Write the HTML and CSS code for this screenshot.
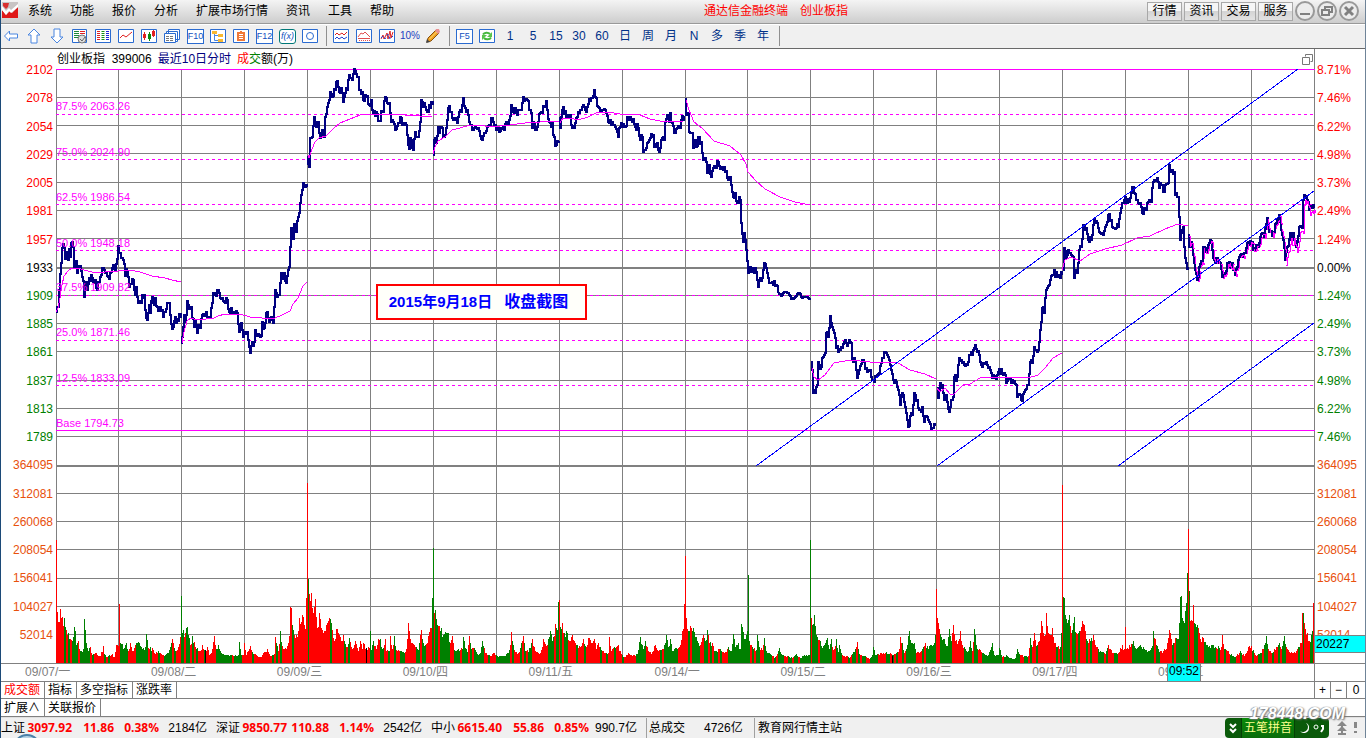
FILE: index.html
```html
<!DOCTYPE html>
<html lang="zh-CN">
<head>
<meta charset="utf-8">
<title>通达信金融终端 创业板指</title>
<link rel="stylesheet" href="styles.css">
</head>
<body>
<header class="menubar">
  <svg class="logo" viewBox="0 0 16 16" aria-hidden="true"><rect width="16" height="16" fill="#c8c4c4"/><path d="M1 1h6l-1 4-2 2-3-3z" fill="#d83030"/><path d="M16 5v11H0V8l4 5 4-4 2 2z" fill="#e01818"/><path d="M0 4l4 5 3-3 2 2 7-6v3l-7 6-2-2-3 4-4-5z" fill="#fff"/></svg>
  <nav class="menu">
    <button>系统</button><button>功能</button><button>报价</button><button>分析</button><button>扩展市场行情</button><button>资讯</button><button>工具</button><button>帮助</button>
  </nav>
  <h1 class="title"><span>通达信金融终端</span><span>创业板指</span></h1>
  <div class="quick"><button>行情</button><button>资讯</button><button>交易</button><button>服务</button></div>
  <div class="window">
    <button aria-label="最小化"><svg viewBox="0 0 20 20"><circle cx="10" cy="10" r="9"/><path d="M5 13h10" stroke-width="2"/></svg></button>
    <button aria-label="还原"><svg viewBox="0 0 20 20"><circle cx="10" cy="10" r="9"/><path d="M8 8V6h7v5h-3M5 9h7v5H5z"/></svg></button>
    <button aria-label="关闭"><svg viewBox="0 0 20 20"><circle cx="10" cy="10" r="9"/><path d="M6 6l8 8M14 6l-8 8" stroke-width="3"/></svg></button>
  </div>
</header>

<div class="toolbar">
  <button aria-label="后退"><svg viewBox="0 0 16 16"><path d="M1.500 8l5-5v3h8v4h-8v3z" fill="#fff" stroke="#4a86e0"/></svg></button>
  <button aria-label="上一个"><svg viewBox="0 0 16 16"><path d="M8 1l6 6h-3v8H5V7H2z" fill="#fff" stroke="#4a86e0"/></svg></button>
  <button aria-label="下一个"><svg viewBox="0 0 16 16"><path d="M8 15l6-6h-3V1H5v8H2z" fill="#fff" stroke="#4a86e0"/></svg></button>
  <button aria-label="自选"><svg viewBox="0 0 16 16"><path class="frame" d="M.5 1.500h14v13H.5z"/><path d="M2 3.500h5M2 5.500h5M2 7.500h5M2 9.500h4" stroke="#1c8a3a"/><path d="M8 3.500h5M8 5.500h5" stroke="#e02020"/><circle cx="10" cy="11" r="4" fill="#ddd" stroke="#777"/><path d="M8 11l2 2 3-4" stroke="#666" fill="none"/></svg></button>
  <button aria-label="行情列表"><svg viewBox="0 0 16 16"><path class="frame" d="M.5 1.500h15v13H.5z"/><g stroke-width="3" stroke-dasharray="1 1"><path d="M3.500 3v10" stroke="#e02020"/><path d="M8 3v10" stroke="#169016"/><path d="M12.500 3v10" stroke="#2020e0"/></g></svg></button>
  <button aria-label="分时图"><svg viewBox="0 0 16 16"><path class="frame" d="M.5 1.500h15v13H.5z"/><path d="M2 10l3-3 3 2 6-5" fill="none" stroke="#e02020"/></svg></button>
  <button aria-label="K线图"><svg viewBox="0 0 16 16"><path class="frame" d="M.5 1.500h15v13H.5z"/><path d="M3.500 4v8M12.500 2v7" stroke="#e02020"/><path d="M3.500 6v4M12.500 3v5" stroke="#e02020" stroke-width="3"/><path d="M8.500 4v9" stroke="#0a8a0a"/><path d="M8.500 6v5" stroke="#0a8a0a" stroke-width="3"/></svg></button>
  <button aria-label="多窗口"><svg viewBox="0 0 16 16"><path class="frame" d="M4.500 1.500h11v10h-11zM2.500 3.500h11v10h-11z"/><path class="frame" d="M.5 5.500h11v9H.5z"/><path d="M2 8.500h8M2 10.500h8M2 12.500h8" stroke="#777" stroke-dasharray="3 1"/></svg></button>
  <button class="key">F10</button>
  <button aria-label="板块"><svg viewBox="0 0 16 16"><path class="frame" d="M.5 1.500h15v13H.5z"/><path d="M4.500 5v7.500H8M4.500 7.500H9" fill="none" stroke="#4a86e0"/><path d="M2 3h5v3H2zM8 6h5v3H8zM8 11h5v3H8z" fill="#f8b830"/></svg></button>
  <button aria-label="自选股"><svg viewBox="0 0 16 16"><path class="frame" d="M.5 1.500h15v13H.5z"/><path d="M4 4h3V3h2v1h3v9H4z" fill="#f07838"/><path d="M6 6.500h4M6 8.500h4M6 10.500h4" stroke="#fff"/></svg></button>
  <button class="key">F12</button>
  <button class="key fx"><i>f(x)</i></button>
  <button aria-label="圆"><svg viewBox="0 0 16 16"><path class="frame" d="M.5 1.500h15v13H.5z"/><circle cx="8" cy="8" r="3.500" fill="none" stroke="#2a6bd0"/></svg></button>
  <span class="sep"></span>
  <button aria-label="双线"><svg viewBox="0 0 16 16"><path class="frame" d="M.5 1.500h15v13H.5z"/><path d="M2 7l2-2 2 2 3-2 2 2 3-3" fill="none" stroke="#e02020"/><path d="M2 11l2-2 2 2 3-2 2 2 3-2" fill="none" stroke="#2040d0"/></svg></button>
  <button aria-label="叠加"><svg viewBox="0 0 16 16"><path class="frame" d="M.5 1.500h15v13H.5z"/><path d="M2 9l3-4 2 1 2-2 3 3 2 2M2 10.500h12" fill="none" stroke="#e05050"/><path d="M3 12.500h11" stroke="#e05050" stroke-dasharray="1 1"/></svg></button>
  <button aria-label="波动"><svg viewBox="0 0 16 16"><path class="frame" d="M.5 1.500h15v13H.5z"/><path d="M2 11l2-4 1 4 3-6 1 6 2-8 1 7 2-6" fill="none" stroke="#e02020"/><path d="M2 10l2-2 2 3 3-5 2 5 3-3" fill="none" stroke="#2040d0" stroke-dasharray="3 2"/></svg></button>
  <button class="percent">10%</button>
  <button aria-label="画线"><svg viewBox="0 0 16 16"><path d="M2 14l1-4 8-8 3 3-8 8z" fill="#f0a020" stroke="#865010"/><path d="M10 3l1-2h3l1 3-2 2z" fill="#e89090"/><path d="M1 15l1-4 3 3z" fill="#444"/><path d="M4.500 11l7-7" stroke="#ffe080"/></svg></button>
  <span class="sep"></span>
  <button class="key">F5</button>
  <button aria-label="刷新"><svg viewBox="0 0 16 16"><path class="frame" d="M.5 1.500h15v13H.5z"/><path d="M4 6.500A4 3 0 0 1 11 6M12 9.500A4 3 0 0 1 5 10" fill="none" stroke="#45b83c" stroke-width="2"/><path d="M13 4v5H8zM3 12V7h5z" fill="#58c44c"/></svg></button>
  <button>1</button><button>5</button><button>15</button><button>30</button><button>60</button><button>日</button><button>周</button><button>月</button><button>N</button><button>多</button><button>季</button><button>年</button>
  <span class="sep"></span>
</div>

<main class="chart">
  <div class="heading">
    <p><span>创业板指&nbsp; 399006</span> <span class="navy">最近10日分时</span> <span><b class="up">成</b><b class="down">交</b>额(万)</span></p>
    <button aria-label="窗口"><svg viewBox="0 0 11 11"><path d="M3.500 2.500v-2h7v7h-2M.5 3.500h7v7h-7z" fill="none" stroke="#777"/></svg></button>
  </div>
  <div class="corner"></div>

  <ol class="axis left">
    <li class="up">2102</li><li class="up">2078</li><li class="up">2054</li><li class="up">2029</li><li class="up">2005</li><li class="up">1981</li><li class="up">1957</li><li>1933</li><li class="down">1909</li><li class="down">1885</li><li class="down">1861</li><li class="down">1837</li><li class="down">1813</li><li class="down">1789</li><li class="vol">364095</li><li class="vol">312081</li><li class="vol">260068</li><li class="vol">208054</li><li class="vol">156041</li><li class="vol">104027</li><li class="vol">52014</li>
  </ol>

  <div class="plot">
    <svg id="plot" viewBox="56 69 1259 595" preserveAspectRatio="none" role="img" aria-label="创业板指最近10日分时走势"></svg>
    <span class="fib" style="top:5.1%">87.5% 2063.26</span>
    <span class="fib" style="top:12.7%">75.0% 2024.90</span>
    <span class="fib" style="top:20.3%">62.5% 1986.54</span>
    <span class="fib" style="top:28%">50.0% 1948.18</span>
    <span class="fib" style="top:35.5%">37.5% 1909.82</span>
    <span class="fib" style="top:43.1%">25.0% 1871.46</span>
    <span class="fib" style="top:50.7%">12.5% 1833.09</span>
    <span class="fib" style="top:58.3%">Base 1794.73</span>
    <p class="note"><span>2015年9月18日</span><span>收盘截图</span></p>
  </div>

  <ol class="axis right">
    <li class="up">8.71%</li><li class="up">7.46%</li><li class="up">6.22%</li><li class="up">4.98%</li><li class="up">3.73%</li><li class="up">2.49%</li><li class="up">1.24%</li><li>0.00%</li><li class="down">1.24%</li><li class="down">2.49%</li><li class="down">3.73%</li><li class="down">4.98%</li><li class="down">6.22%</li><li class="down">7.46%</li><li class="vol">364095</li><li class="vol">312081</li><li class="vol">260068</li><li class="vol">208054</li><li class="vol">156041</li><li class="vol">104027</li><li class="vol">52014</li>
    <li class="cursor">20227</li>
  </ol>

  <div class="dates">
    <ol><li>09/07/一</li><li>09/08/二</li><li>09/09/三</li><li>09/10/四</li><li>09/11/五</li><li>09/14/一</li><li>09/15/二</li><li>09/16/三</li><li>09/17/四</li><li>09/18/五</li></ol>
    <span class="time">09:52</span>
  </div>
</main>

<div class="tabs">
  <button class="up">成交额</button><button>指标</button><button>多空指标</button><button>涨跌率</button>
  <div class="zoomers"><button>+</button><button>−</button><button>0</button></div>
</div>
<div class="tabs lower"><button>扩展∧</button><button>关联报价</button></div>

<footer class="status">
  <div class="index"><span>上证</span><b>3097.92</b><b>11.86</b><b>0.38%</b><span>2184亿</span></div>
  <div class="index"><span>深证</span><b>9850.77</b><b>110.88</b><b>1.14%</b><span>2542亿</span></div>
  <div class="index"><span>中小</span><b>6615.40</b><b>55.86</b><b>0.85%</b><span>990.7亿</span></div>
  <div class="total"><span>总成交</span><span>4726亿</span></div>
  <div class="host">教育网行情主站</div>
  <div class="ime">
    <svg viewBox="0 0 14 20"><path d="M4 6l3 3 3-3M4 11l3 3 3-3" fill="none" stroke="#fff" stroke-width="2"/></svg>
    <span>五笔拼音</span>
    <svg class="wide" viewBox="0 0 34 20"><path d="M11 5a5 5 0 0 1-6 8 5 5 0 0 0 9-3 5 5 0 0 0-3-5z" fill="#fff"/><circle cx="21" cy="9" r="2" fill="none" stroke="#fff"/><path d="M26 8h2v3l-2 3" fill="none" stroke="#fff" stroke-width="2"/></svg>
  </div>
  <svg class="tray" viewBox="0 0 28 16" aria-hidden="true"><path d="M6 1l5 5H1zM6 6l5 5H1z" fill="#888"/><path d="M6 4v10M2 14h8" stroke="#888" stroke-width="2"/><path d="M19.500 2v6" stroke="#888" stroke-width="3"/><path d="M18 12h3" stroke="#888" stroke-width="2"/></svg>
  <span class="orb"></span>
  <span class="watermark">178448.COM</span>
</footer>
<script src="chart.js"></script>
</body>
</html>
```
FILE: styles.css
```css
* { box-sizing: border-box; }
body {
  margin: 0;
  min-height: 100vh;
  display: flex;
  flex-direction: column;
  overflow: hidden;
  background: #fff;
  border-left: 1px solid #1c4a78;
  border-right: 1px solid #6f8498;
  font: 12px/16px "Liberation Sans", "Noto Sans CJK SC", sans-serif;
  color: #000;
}
button {
  margin: 0;
  padding: 0;
  border: 0;
  background: none;
  font: inherit;
  color: inherit;
  white-space: nowrap;
}
ol { list-style: none; margin: 0; padding: 0; }
p, h1 { margin: 0; font: inherit; }
.up { color: #f00; }
.down { color: #008000; }
.navy { color: #000080; }
.vol { color: #e8500c; }

.menubar {
  position: relative;
  display: flex;
  align-items: center;
  height: 24px;
  padding-bottom: 1px;
  background: linear-gradient(#f4f4f4, #cdcdcd);
  border-bottom: 1px solid #999;
}
.logo { width: 16px; height: 16px; margin: 0 10px 3px 1px; }
.menu { display: flex; gap: 18px; }
.title {
  position: absolute;
  left: 50%;
  margin-left: 21px;
  display: flex;
  gap: 12px;
  color: #f00;
}
.quick { display: flex; gap: 2px; margin-left: auto; }
.quick button {
  width: 35px;
  height: 19px;
  border: 1px solid #a8a8a8;
  background: linear-gradient(#f6f6f6 50%, #d4d4d4 50%, #e2e2e2);
}
.window { display: flex; gap: 2px; padding: 0 6px 0 2px; }
.window button { width: 20px; height: 20px; }
.window svg {
  display: block;
  fill: none;
  stroke: #808080;
  stroke-width: 2;
}
.window circle { fill: #ececec; stroke: #999; }

.toolbar {
  display: flex;
  align-items: center;
  height: 25px;
  padding-bottom: 1px;
  background: #f0f0f0;
  border-top: 1px solid #fff;
  border-bottom: 1px solid #696969;
  color: #003088;
}
.toolbar button {
  width: 23px;
  height: 20px;
  padding-right: 3px;
  display: flex;
  justify-content: center;
  align-items: center;
}
.toolbar svg { width: 16px; height: 16px; }
.toolbar .frame { fill: #fff; stroke: #2a6bd0; }
.toolbar .sep { width: 8px; height: 20px; }
.toolbar .sep::before {
  content: "";
  display: block;
  width: 1px;
  height: 20px;
  margin-left: 3px;
  background: #909090;
}
.toolbar .key {
  width: 17px;
  height: 15px;
  margin: 0 4px 0 2px;
  padding: 0;
  border: 1px solid #2a6bd0;
  background: #fff;
  font-size: 9px;
  line-height: 12px;
  color: #1050c0;
}
.toolbar .fx { border-color: #007878; border-radius: 3px; }
.toolbar .percent { font-size: 10px; color: #2040c0; }

.chart {
  flex: 1;
  display: grid;
  grid-template-columns: 55px minmax(0, 1fr) 50px;
  grid-template-rows: 20px minmax(0, 1fr) 18px;
}
.heading {
  grid-column: 1 / 3;
  display: flex;
  justify-content: space-between;
  align-items: center;
  padding-left: 56px;
  border-right: 1px solid #808080;
}
.heading p { display: flex; gap: 6px; }
.heading b { font-weight: normal; }
.heading button { width: 11px; height: 15px; margin-right: 1px; }
.heading svg { display: block; width: 11px; height: 11px; }
.axis {
  display: grid;
  grid-template-rows: repeat(21, minmax(0, 1fr));
  align-items: center;
  margin: -13px 0 15px;
}
.left { text-align: right; padding-right: 3px; }
.right { position: relative; padding-left: 2px; }
.cursor {
  position: absolute;
  left: 0;
  right: 0;
  bottom: -4px;
  padding-left: 1px;
  background: #0ff;
  border: solid #808080;
  border-width: 1px 0;
}
.plot { position: relative; }
.plot svg {
  position: absolute;
  width: 100%;
  height: 100%;
  overflow: visible;
}
.fib {
  position: absolute;
  left: 0;
  font-size: 11px;
  line-height: 14px;
  color: #f0f;
}
.note {
  position: absolute;
  left: 25.4%;
  top: 36.1%;
  display: flex;
  gap: 12px;
  padding: 6px 11px;
  border: 2px solid #f00;
  background: #fffffa;
  font-size: 15px;
  line-height: 20px;
  font-weight: bold;
  color: #00f;
  height: 36px;
  width: 211px;
  white-space: nowrap;
}
.note span + span { font-size: 16px; }
.dates {
  grid-column: 1 / 4;
  position: relative;
  border-bottom: 1px solid #808080;
  padding: 0 50px 0 55px;
  color: #808080;
}
.dates::after {
  content: "";
  position: absolute;
  right: 50px;
  top: 0;
  bottom: 0;
  border-right: 1px solid #808080;
}
.dates::before {
  content: "";
  position: absolute;
  left: 0;
  right: 0;
  top: -1px;
  border-top: 1px solid #808080;
}
.dates ol { display: grid; grid-template-columns: repeat(10, 1fr); }
.dates li { margin-left: -31px; white-space: nowrap; }
.time {
  position: absolute;
  right: 164px;
  top: 0;
  width: 34px;
  height: 18px;
  background: #0ff;
  border: 1px solid #808080;
  border-top: 0;
  line-height: 15px;
  text-align: center;
  color: #000;
}

.tabs {
  display: flex;
  height: 17px;
  border-bottom: 1px solid #808080;
}
.tabs button { padding: 0 4px 0 3px; border-right: 1px solid #808080; line-height: 16px; }
.lower { height: 18px; }
.lower button:first-child { width: 44px; }
.zoomers {
  display: flex;
  width: 51px;
  margin-left: auto;
  border-left: 1px solid #808080;
}
.zoomers button { width: 16px; padding: 0; }
.zoomers button:last-child { width: 18px; border-right: 0; }

.status {
  position: relative;
  display: flex;
  align-items: center;
  height: 21px;
  background: #f0f0f0;
  border-top: 1px solid #e0e0e0;
}
.index {
  display: grid;
  grid-template-columns: 25px 46px 42px 45px 48px;
  width: 215px;
  text-align: right;
  white-space: nowrap;
}
.index span:first-child { text-align: left; }
.index b { color: #f00; font-family: "Open Sans", sans-serif; }
.total {
  display: flex;
  gap: 19px;
  width: 109px;
  padding-left: 2px;
  border: solid #a0a0a0;
  border-width: 0 1px;
  line-height: 20px;
}
.host { padding-left: 3px; }
.ime {
  display: flex;
  align-items: center;
  width: 104px;
  height: 20px;
  margin-left: auto;
  border-radius: 4px;
  background: #0a5a0a;
  color: #ffff90;
}
.ime span {
  width: 54px;
  line-height: 20px;
  text-align: center;
  background: linear-gradient(#0a8a0a, #0a6c0a);
  border: solid #064006;
  border-width: 0 1px;
}
.ime svg { width: 16px; height: 20px; }
.ime .wide { width: 34px; }
.tray { width: 28px; height: 16px; margin: 0 1px 0 7px; }
.orb {
  position: absolute;
  left: 12px;
  bottom: -24px;
  width: 28px;
  height: 28px;
  border: 2px solid #4a80a8;
  border-radius: 50%;
  background: #b8d4e4;
}
.watermark {
  position: absolute;
  right: 20px;
  top: -16px;
  font: bold italic 16px/24px "Liberation Sans", sans-serif;
  color: #fff;
  text-shadow: 0 0 1px #888, 1px 1px 2px #666, -1px 0 1px #aaa;
}
```
FILE: chart.js
```js
const NS = "http://www.w3.org/2000/svg";
const svg = document.getElementById("plot");

function draw(d, stroke, width = 1, extra = {}) {
  const path = document.createElementNS(NS, "path");
  const attrs = { d, stroke, "stroke-width": width, fill: "none", "shape-rendering": "crispEdges", ...extra };
  for (const [key, value] of Object.entries(attrs)) path.setAttribute(key, value);
  svg.append(path);
}
const parse = text => text.trim().split(/\s+/).map(pair => pair.split(",").map(Number));
function noise(n) {
  const v = Math.sin(n * 12.9898) * 43758.5453;
  return v - Math.floor(v);
}

// Grid
const rows = [97, 125, 153, 182, 210, 238, 295, 323, 351, 380, 408, 436, 493, 521, 549, 578, 606, 634, 663];
const columns = [56, 118, 181, 244, 307, 370, 433, 496, 559, 622, 685, 747, 810, 873, 936, 999, 1062, 1125, 1188, 1251, 1314];
draw(rows.map(y => `M56 ${y + 0.5}H1315`).join(""), "#808080");
draw(columns.map(x => `M${x + 0.5} 69V664`).join(""), "#808080");
draw("M56 268H1315M56 466H1315", "#808080", 2);

// Volume: x,height
const volume = parse(`
56,123 57,51 58,41 59,41 60,54 61,45 64,45 65,36 68,30 70,24 73,26 74,36 75,32 76,18 78,22 80,12 83,14 84,44 85,33 86,20 88,12 90,16 92,8 96,10 100,7 103,17 104,9 106,6 112,9 114,6 116,18 118,17
119,59 120,20 124,15 126,20 128,12 130,20 132,12 136,20 139,20 142,14 145,16 146,29 148,15 152,15 155,9 158,12 162,8 168,10 170,16 172,24 175,12 178,16 180,26
181,67 182,30 183,33 185,30 187,36 189,25 190,18 192,27 195,16 200,12 202,18 205,10 207,16 209,8 212,14 214,27 216,14 218,18 221,10 226,8 232,8 238,8 239,21 241,8 243,8 244,20 246,8 250,17 253,9 260,6 267,14 270,7 274,9 275,26 278,12 280,32 282,17 286,14 289,27 290,56 291,55 292,38 294,28 297,26 299,45 303,46 305,34 306,65
307,180 308,84 309,69 310,62 311,70 313,50 315,64 316,46 318,36 319,50 321,35 323,30 326,38 329,45 331,40 333,25 335,24 336,34 338,30 341,22 343,28 346,16 349,25 352,14 355,22 358,12 360,22 362,14 363,20 366,15 369,15
370,32 371,13 373,22 376,14 378,24 380,24 382,14 385,24 386,12 389,12 390,27 392,14 394,27 396,13 400,12 405,11 407,24 408,40 409,32 411,20 414,18 418,13 420,28 421,33 423,20 427,20 430,35 431,35 432,65
433,115 434,50 435,53 437,38 439,37 441,35 443,28 448,30 450,20 452,27 454,13 458,14 462,14 463,26 465,15 467,11 469,27 471,14 474,15 477,9 480,10 482,22 485,10 490,7 493,10 497,7 503,7 508,10 510,18 511,31 512,22 514,13 518,10 522,22 523,27 525,12 530,15 532,24 535,12 540,10 543,24 546,17 549,26 550,32 552,22 555,39 557,33 558,61
559,63 560,36 562,40 564,30 567,30 570,22 572,28 575,20 580,16 583,24 586,16 588,25 592,20 594,24 596,14 598,20 602,12 608,10 609,26 611,12 614,16 618,18 620,12 624,6 628,10 632,7 637,9 640,26 643,14 645,22 648,12 652,11 655,18 658,12 662,14 665,20 666,28 668,16 670,24 672,12 676,15 680,18 682,32 683,34 684,59
685,107 686,45 687,34 690,37 693,35 695,26 697,22 700,18 703,28 705,22 707,33 709,20 712,20 714,12 720,14 724,10 728,16 731,12 733,29 735,16 738,20 740,14 741,39 742,36 744,24 747,32
748,88 749,22 752,16 756,13 757,28 759,16 762,13 764,25 766,12 770,9 775,6 779,15 782,8 788,7 792,5 796,9 800,5 804,8 809,8
810,123 811,45 812,38 814,48 815,37 817,26 820,22 823,17 825,20 827,25 829,14 831,24 833,13 836,24 838,11 839,18 842,8 850,6 855,14 857,21 859,9 864,7 870,5 872,8 873,16 875,8 880,10 886,11 890,10 892,8 896,10 899,14 900,26 902,20 904,10 907,18 909,32 911,20 914,20 916,10 921,12 925,20 928,14 930,18 933,18 935,28
936,74 937,45 939,34 941,26 944,24 947,17 949,34 951,22 953,38 955,22 958,22 960,32 962,18 965,14 968,12 970,22 972,12 974,34 976,18 979,14 982,10 988,8 992,20 994,8 998,8 999,15 1002,6 1006,8 1010,5 1015,5 1017,14 1020,8 1028,7 1030,25 1032,16 1034,30 1036,17 1039,22 1041,42 1043,30 1045,28 1046,50 1048,30 1050,28 1052,35 1054,20 1057,16 1060,16 1061,30
1062,178 1063,66 1064,65 1066,44 1067,40 1069,48 1071,30 1074,46 1076,30 1078,30 1080,32 1082,42 1084,38 1086,24 1090,22 1093,28 1095,18 1100,12 1105,9 1108,18 1112,10 1118,10 1122,18 1124,14 1125,36 1126,14 1133,22 1136,14 1140,18 1144,14 1148,12 1152,17 1153,32 1156,18 1160,12 1166,14 1169,33 1172,18 1176,25 1178,24 1179,40 1180,66 1181,67 1182,45 1184,40 1186,60 1187,90
1188,134 1189,72 1190,42 1192,42 1193,58 1194,40 1197,38 1200,24 1203,25 1207,18 1211,18 1215,16 1221,16 1222,28 1224,14 1228,12 1232,7 1236,7 1240,12 1244,7 1248,16 1251,17 1255,8 1260,10 1264,18 1266,27 1268,14 1272,10 1276,16 1279,20 1281,14 1284,27 1287,14 1290,10 1296,12 1300,20 1301,20 1302,50 1303,50 1304,40 1306,28 1307,30 1309,22 1311,28 1312,32 1313,60`);

// Share of rising minutes from each x onwards
const mood = parse(`56,1 64,.25 79,.4 94,.9 104,.3 110,.8 120,.15 128,.5 144,.3 152,.6 160,.3 170,.2 176,.9 182,.75 192,.15 198,.75 208,.6 216,.1 230,.3 246,.8 250,.5 257,.8 276,.5 282,.6 294,1 308,.2 310,.7 321,.9 344,.3 346,.8 368,.2 372,.4 386,.5 400,.2 405,.9 410,.5 424,.8 435,.25 454,.5 470,.2 484,.7 496,.2 510,.4 526,.4 534,.8 548,.15 560,.7 578,.7 590,.6 605,.3 616,.8 636,.2 646,.6 664,.4 680,1 687,.25 696,.4 712,.6 722,.2 745,.3 750,.6 764,.2 784,.5 800,.5 812,.3 820,.6 835,.3 850,.3 876,.7 896,.3 910,.6 923,.15 932,.5 942,.3 952,.7 962,.2 972,.5 984,.15 1016,.2 1027,.8 1048,1 1056,.2 1068,.2 1080,.6 1092,.4 1098,.1 1106,.7 1112,.3 1118,.9 1128,.4 1138,.15 1152,.6 1164,.9 1170,.2 1186,.1 1190,.4 1204,.2 1226,.3 1236,.7 1252,.5 1262,.3 1268,.6 1280,.5 1288,.7 1302,.7 1308,.3`);
const forced = { 56: 1, 84: 0, 119: 1, 181: 0, 307: 1, 308: 0, 433: 0, 558: 0, 559: 1, 685: 1, 748: 0, 810: 0, 936: 1, 1062: 1, 1187: 0, 1188: 1, 1302: 1, 1313: 1 };
const bars = ["", ""];
let v = 0;
let m = 0;
for (let x = 56; x < 1314; x++) {
  while (v < volume.length - 2 && volume[v + 1][0] <= x) v++;
  while (m < mood.length - 1 && mood[m + 1][0] <= x) m++;
  const [x0, h0] = volume[v];
  const [x1, h1] = volume[v + 1];
  const exact = x === x0 || x === x1;
  let h = h0 + (h1 - h0) * (x - x0) / (x1 - x0);
  if (!exact) h = h * (0.82 + 0.25 * noise(x));
  const rising = forced[x] ?? (noise(Math.floor(x / 2) + 700) < mood[m][1] ? 1 : 0);
  bars[rising] += `M${x} 663h1v${-Math.round(h)}h-1z`;
}
draw(bars[0], "none", 0, { fill: "#008000" });
draw(bars[1], "none", 0, { fill: "#f00" });
draw("M205.500 650V663M366.500 648V663M892.500 656V663", "#000");

// Retracement levels
draw("M56 69.500H1315M56 430.500H1315", "#f0f");
draw([114, 159, 204, 250, 295, 340, 385].map(y => `M56 ${y + 0.5}H1315`).join(""), "#f0f", 1, { "stroke-dasharray": "3 3" });

// Price, one line per trading day
const days = [
"56,312 58,307 59,290 61,263 62,248 64,248 65,259 67,252 68,260 69,249 70,257 71,243 73,247 74,267 76,261 77,273 79,266 80,266 82,277 83,281 84,297 86,282 87,290 89,278 92,278 93,282 95,280 97,290 99,282 101,275 103,268 105,273 108,277 110,273 112,268 115,270 117,259 118,246 119,253 122,258 123,260 125,276 126,269 128,277 129,287 132,279 135,295 136,287 138,303 141,303 142,295 144,295 145,310 147,320 149,305 150,313 152,297 154,305 155,298 158,311 160,307 163,317 165,312 167,303 169,303 170,315 172,329 175,317 176,323 179,314 181,313",
"181,343 183,327 184,315 185,322 187,301 189,309 191,307 192,318 194,327 195,320 197,333 198,325 200,328 202,315 204,316 206,312 208,318 210,317 212,303 213,293 216,296 218,290 220,298 223,301 225,303 227,300 229,312 231,308 233,313 237,313 239,332 241,323 243,337 245,332 247,332 249,347 250,353 252,342 253,346 255,330 257,336 261,336 262,322 264,328 267,312 269,322 271,317 273,323 275,290 277,297 279,295 281,273 282,279 284,273 286,283 289,267 290,247 291,228 293,239 294,224 296,232 298,217 300,203 302,190 303,183 305,187 307,187",
"307,157 309,167 310,138 312,137 314,117 316,127 318,122 320,138 322,130 324,137 325,117 327,107 330,92 332,97 334,89 337,81 339,92 341,88 343,102 346,88 347,90 349,75 352,80 354,69 356,74 358,77 359,90 362,92 363,100 367,96 369,105 371,100 373,113 376,112 379,121 382,112 383,112 385,97 387,103 389,103 391,122 393,122 395,130 398,123 401,118 402,125 405,123 407,135 409,149 410,138 413,150 415,132 418,137 420,122 421,100 423,107 425,107 427,112 429,105 433,105",
"433,155 434,140 436,143 438,127 439,133 441,127 443,137 444,137 447,120 448,108 451,112 453,120 455,118 457,123 459,112 461,112 463,98 465,108 467,110 469,122 471,125 473,130 475,127 478,128 482,140 484,133 487,127 489,125 492,118 494,125 497,127 499,132 501,128 504,130 506,122 509,120 511,105 513,112 515,108 517,115 519,110 521,110 523,97 525,100 527,100 529,110 531,113 532,128 534,123 536,130 538,122 540,113 542,113 544,107 546,101 547,110 549,122 552,123 553,135 555,146 557,141 559,141",
"559,118 560,128 562,110 565,111 568,118 570,115 572,128 574,128 576,118 578,112 581,110 582,107 585,110 587,107 589,99 592,98 594,90 596,98 598,107 600,112 603,110 605,110 608,122 612,122 614,125 617,132 618,137 620,127 625,127 627,117 630,117 633,119 635,127 638,128 640,140 642,137 643,152 646,148 647,143 649,140 651,134 653,135 654,147 657,143 659,152 661,140 664,140 665,122 667,115 669,122 670,113 672,123 675,133 677,128 679,128 681,120 684,116",
"685,99 686,115 688,113 689,132 692,133 693,148 695,140 697,146 698,137 701,142 703,160 705,158 707,173 709,165 711,177 713,168 716,168 718,162 721,168 724,167 727,178 730,177 732,192 733,197 735,193 737,203 740,200 741,223 743,242 744,233 746,250 748,273 750,267 752,272 753,268 756,272 758,287 760,278 762,278 764,263 766,268 768,278 772,282 773,285 776,285 778,293 781,296 784,292 788,293 791,299 795,297 799,293 801,297 805,297 810,298",
"811,362 812,370 813,393 815,393 817,385 818,362 821,367 823,357 825,353 826,333 828,337 830,316 832,327 834,333 836,348 838,352 841,347 842,348 845,340 848,343 851,343 852,360 855,362 857,378 859,370 862,360 864,362 867,372 869,370 872,380 874,382 877,375 879,373 882,358 883,358 885,352 887,355 890,365 893,380 895,380 897,387 900,405 902,393 905,407 908,427 911,413 912,415 914,393 917,400 919,410 922,407 924,422 927,417 929,422 932,428 935,426",
"937,388 938,398 940,383 942,385 944,400 946,395 949,412 951,400 953,397 954,377 957,377 959,358 962,363 964,365 967,365 969,355 972,355 975,345 977,352 979,355 981,365 983,363 987,365 989,367 992,378 996,379 999,369 1002,373 1004,373 1006,383 1009,379 1013,383 1016,385 1017,397 1020,395 1022,401 1025,390 1028,385 1030,362 1032,363 1034,347 1037,352 1039,342 1040,330 1042,308 1044,313 1046,290 1049,285 1052,275 1056,272 1059,275 1062,275",
"1063,270 1064,248 1066,258 1068,250 1071,255 1073,257 1074,278 1076,270 1077,273 1079,250 1081,247 1083,225 1086,228 1088,240 1092,235 1094,219 1097,223 1099,232 1102,233 1105,227 1108,215 1111,220 1114,228 1118,227 1120,213 1123,203 1125,197 1127,203 1130,198 1132,187 1134,193 1137,200 1140,203 1142,213 1144,208 1146,210 1148,202 1151,202 1153,182 1155,180 1157,178 1159,188 1161,185 1163,192 1165,185 1168,183 1169,165 1172,170 1174,172 1175,195 1178,197 1180,240 1183,227 1184,247 1186,263 1188,267",
"1188,235 1189,247 1191,242 1193,255 1194,263 1197,280 1199,267 1202,263 1203,247 1206,252 1208,245 1210,240 1212,250 1214,260 1217,258 1220,263 1222,277 1225,273 1227,263 1230,267 1232,263 1235,275 1237,267 1240,255 1243,257 1245,253 1248,242 1251,242 1253,250 1257,247 1259,243 1262,233 1264,237 1267,218 1269,232 1273,232 1276,223 1279,215 1281,230 1283,240 1285,260 1287,247 1290,233 1292,240 1293,233 1296,247 1299,227 1302,228 1303,200 1304,195 1307,200 1309,210 1312,208 1314,208"
].map(parse);

// Stepped line with a minute-by-minute wobble between known points
function stepped(points, size, dx = 0, dy = 0) {
  let d = `M${points[0][0] + dx} ${points[0][1] + dy}`;
  points.forEach(([x, y], i) => {
    d += `H${x + dx}V${y + dy}`;
    const next = points[i + 1];
    if (!next) return;
    for (let k = x + 1; k < next[0]; k++) {
      const mid = y + (next[1] - y) * (k - x) / (next[0] - x);
      d += `H${k + dx}V${Math.round(mid + (noise(k) - 0.5) * size) + dy}`;
    }
  });
  return d;
}
days.forEach((points, i) => {
  const calmFrom = i === 5 ? 780 : Infinity;
  draw(stepped(points.filter(p => p[0] <= calmFrom), 8), "#000080", 2);
  const calm = points.filter(p => p[0] >= calmFrom - 3);
  if (calm.length) draw(stepped(calm, 2), "#000080", 2);
});
draw(stepped(days[9].filter(p => p[0] < 1287), 8, 1, 1), "#f0f", 1, { "stroke-dasharray": "12 4" });
draw(stepped(days[9].filter(p => p[0] >= 1285), 8, 1, 5), "#f0f", 1);

// Average price
const averages = [
"56,312 58,308 60,298 62,285 64,276 68,271 72,268 78,268 84,270 92,272 105,272 118,271 130,270 140,272 152,276 165,278 172,280 181,282",
"182,343 184,332 187,321 191,318 197,320 206,319 214,318 218,316 225,314 240,314 250,317 262,318 275,318 282,315 290,311 293,304 298,298 303,286 307,282",
"308,155 309,158 312,149 315,142 319,138 326,136 333,129 340,123 350,119 360,115 373,114 390,114 405,115 420,116 432,116",
"433,154 435,147 438,141 445,137 452,130 460,128 470,125 485,126 500,126 510,125 525,123 540,122 555,121 559,122",
"560,123 563,118 570,118 578,120 588,117 596,113 607,112 620,114 640,115 650,119 660,121 683,121",
"686,100 689,110 694,122 702,128 714,141 730,146 741,155 746,164 748,172 756,181 765,189 780,197 795,202 810,205",
"812,368 814,377 818,380 825,375 834,363 850,360 870,362 898,363 910,370 925,374 936,379",
"937,388 940,392 945,388 950,394 954,394 963,385 970,384 980,378 1000,377 1028,378 1038,375 1045,368 1053,358 1062,353",
"1062,270 1065,260 1071,257 1080,261 1090,254 1105,249 1122,245 1137,238 1150,236 1165,229 1178,224 1188,226"];
averages.forEach(points => draw("M" + points, "#f0f"));

// Channel
draw("M756 466L1298 69M937 466L1314 191M1118 466L1314 323", "#00f");
```
